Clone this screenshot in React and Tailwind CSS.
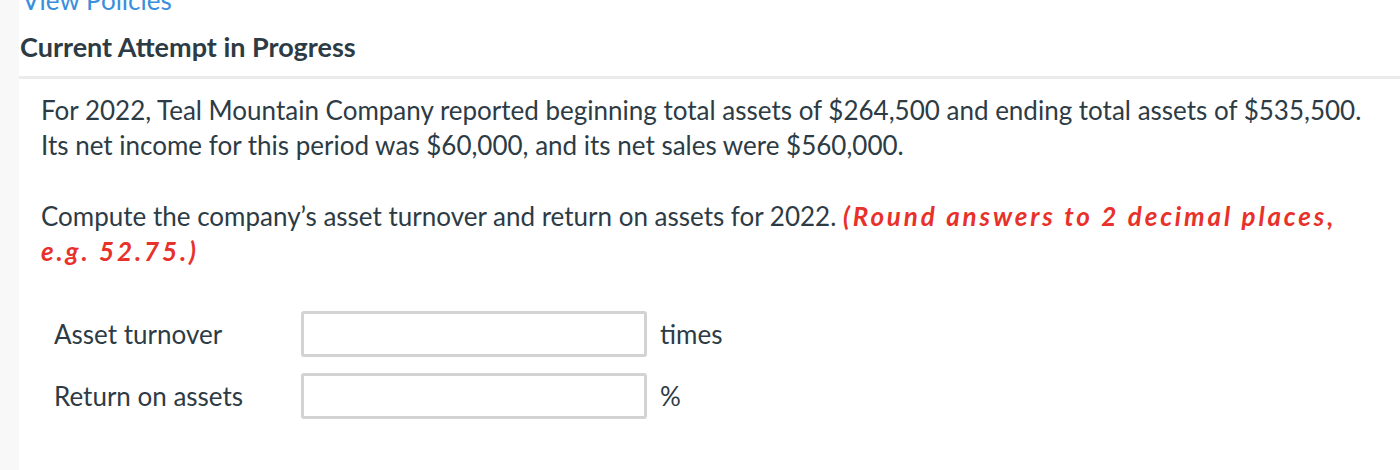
import React from "react";

export default function App() {
  return (
    <div className="flex w-[1400px] h-[470px] overflow-hidden bg-white text-[#2d3b45]" style={{ fontFamily: "Lato, 'Noto Sans', sans-serif" }}>
      <div className="w-[19px] shrink-0 bg-[#f8f8f8]" />
      <div className="flex-1 flex flex-col">
        <div className="h-[20px] overflow-hidden relative">
          <div className="absolute left-[3px] top-[-15px] text-[26px] leading-[30px] text-[#3a8fdc] whitespace-nowrap">View Policies</div>
        </div>
        <div className="pl-[1px] pt-[12px] pb-[14px] text-[27px] font-bold leading-[30px]">Current Attempt in Progress</div>
        <div className="h-[3px] bg-[#ebebeb]" />
        <div className="pl-[22px] pt-[14px] text-[26px] leading-[35px]">
          <p className="whitespace-nowrap">For 2022, Teal Mountain Company reported beginning total assets of $264,500 and ending total assets of $535,500.<br />Its net income for this period was $60,000, and its net sales were $560,000.</p>
          <p className="mt-[36px] pr-[40px]">
            Compute the company’s asset turnover and return on assets for 2022.{" "}
            <span className="font-bold italic text-[#e8312a] tracking-[0.11em]">(Round answers to 2 decimal places, e.g. 52.75.)</span>
          </p>
        </div>
        <div className="pl-[35px] pt-[42px] flex flex-col gap-[16px] text-[26px]">
          <div className="flex items-center h-[46px]">
            <div className="w-[247px]">Asset turnover</div>
            <div className="w-[346px] h-[46px] border-[3px] border-[#d3d3d3] rounded-[3px] bg-white" />
            <div className="ml-[13px]">times</div>
          </div>
          <div className="flex items-center h-[46px]">
            <div className="w-[247px]">Return on assets</div>
            <div className="w-[346px] h-[46px] border-[3px] border-[#d3d3d3] rounded-[3px] bg-white" />
            <div className="ml-[13px]">%</div>
          </div>
        </div>
      </div>
    </div>
  );
}
